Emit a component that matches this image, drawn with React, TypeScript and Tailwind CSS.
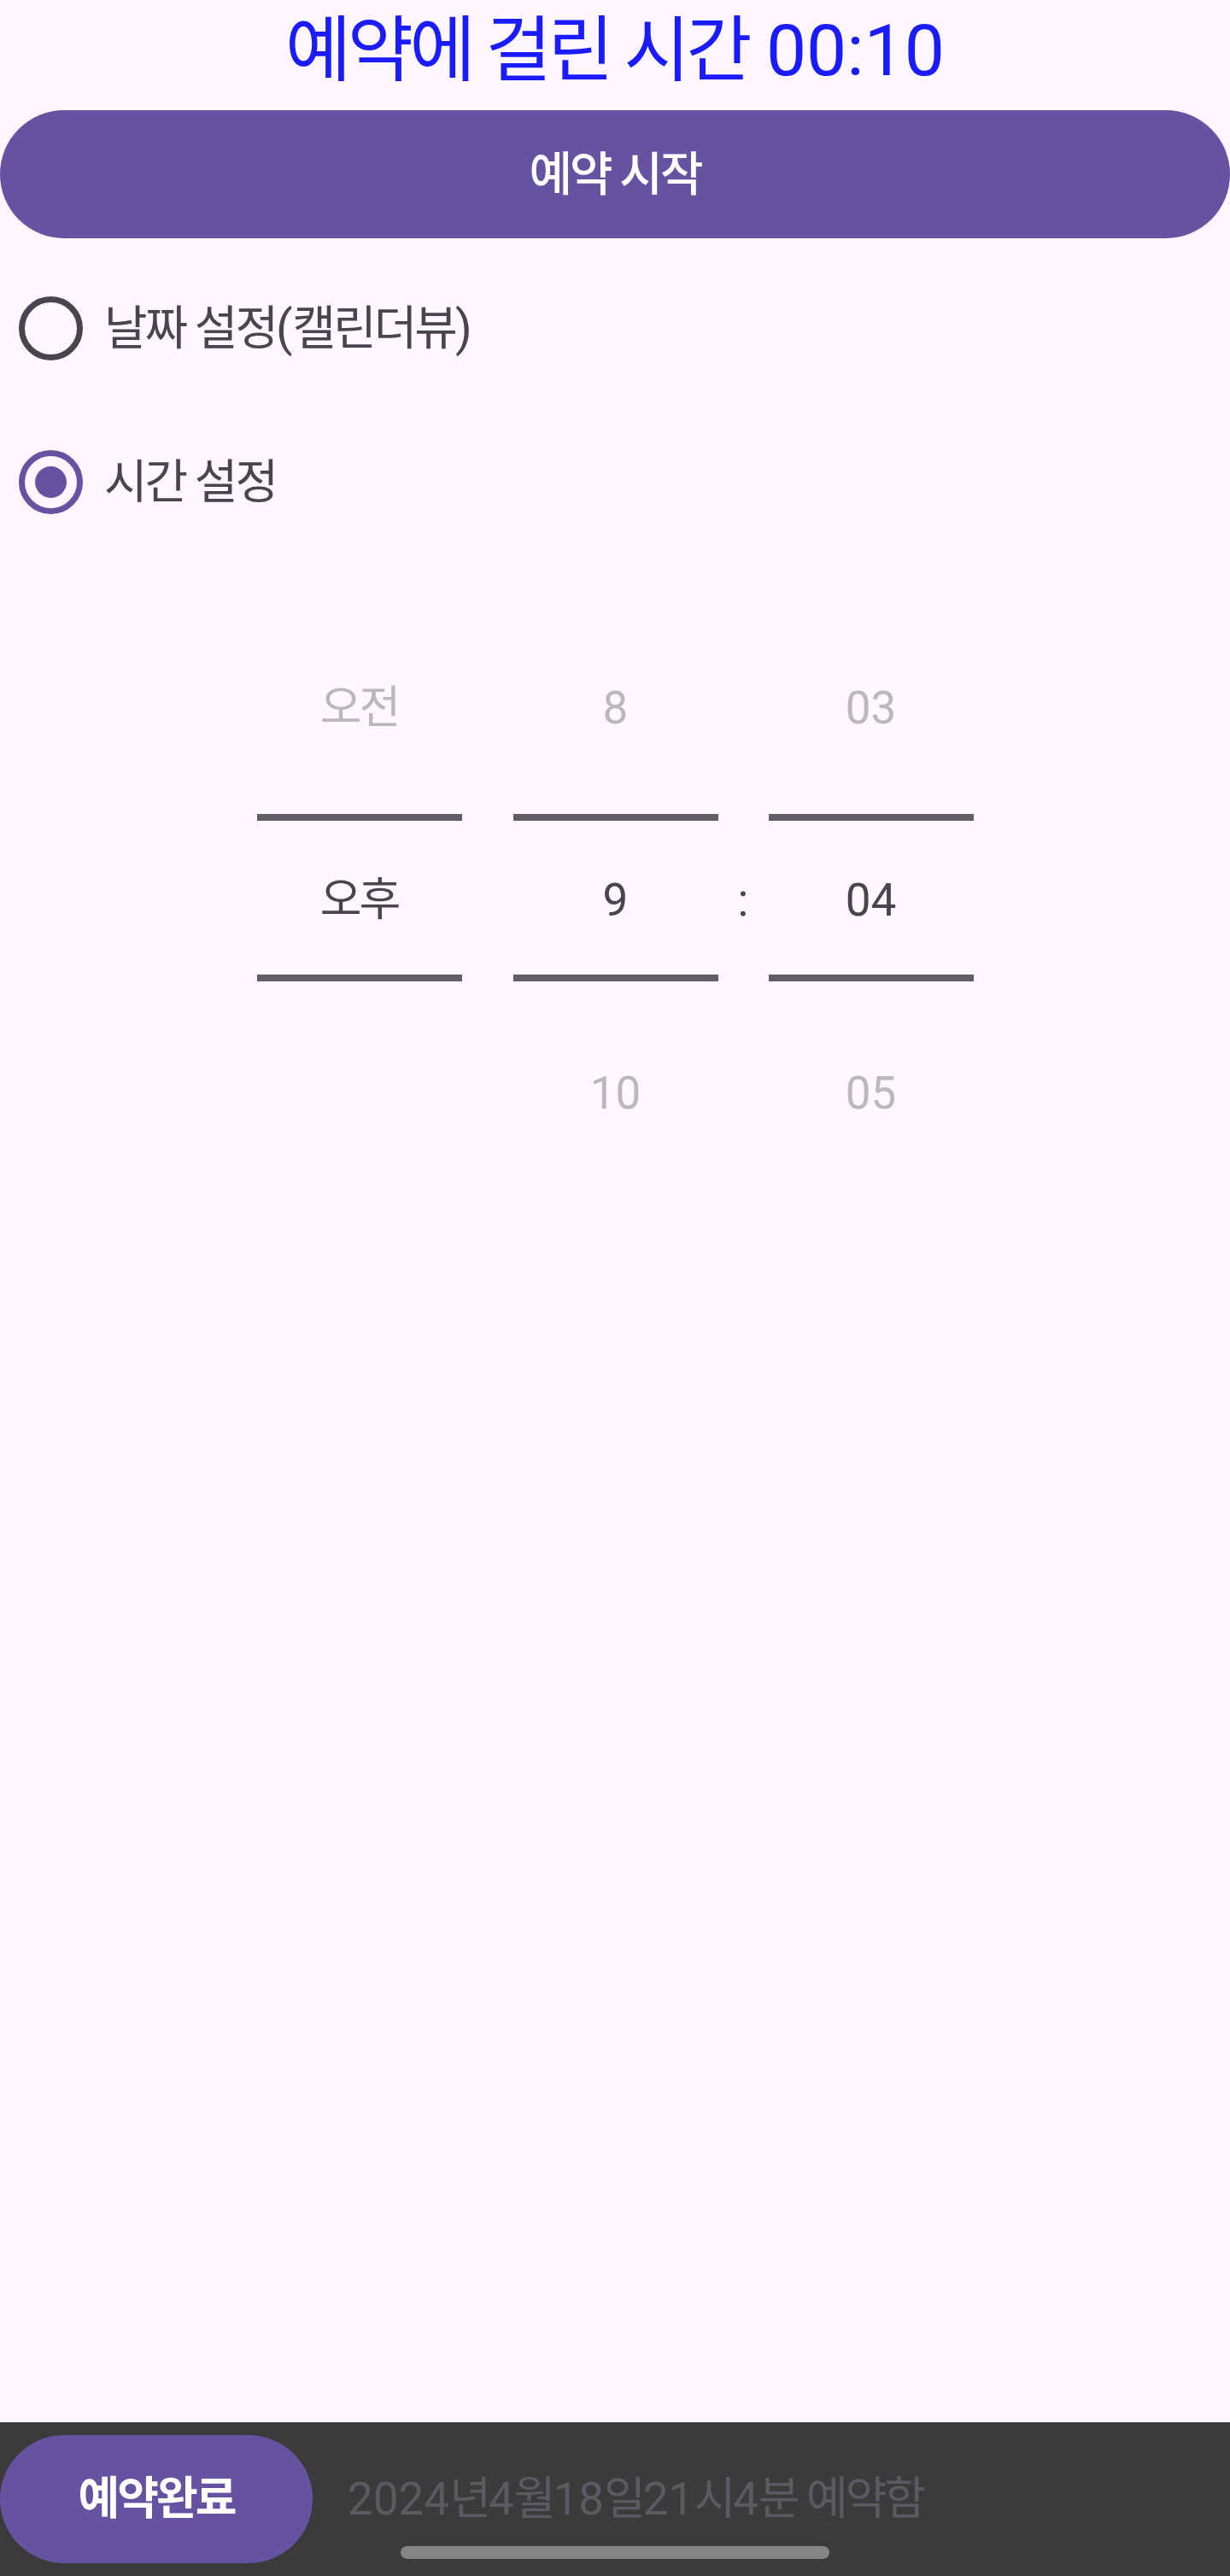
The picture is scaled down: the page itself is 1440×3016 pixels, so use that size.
import React from "react";

function PickerColumn({
  top,
  mid,
  bottom,
  korean,
}: {
  top: string;
  mid: string;
  bottom: string;
  korean?: boolean;
}) {
  const textCls = korean ? "text-[53px] tracking-[-3px]" : "text-[53px]";
  return (
    <div className="w-[240px] flex flex-col">
      <div className={`h-[253px] pt-[6px] flex items-center justify-center leading-none text-[#bab7bd] ${textCls}`}>
        {top}
      </div>
      <div className="h-[8px] bg-[#625e67]" />
      <div className={`h-[180px] pt-[6px] flex items-center justify-center leading-none text-[#49454f] ${textCls}`}>
        {mid}
      </div>
      <div className="h-[8px] bg-[#625e67]" />
      <div className={`h-[258px] pt-[4px] flex items-center justify-center leading-none text-[#bab7bd] ${textCls}`}>
        {bottom}
      </div>
    </div>
  );
}

export default function App() {
  return (
    <div className="h-[3016px] flex flex-col bg-[#fef7ff] [font-family:Roboto,'Noto_Sans_CJK_KR',sans-serif]">
      {/* Title */}
      <div className="h-[120px] flex items-center justify-center leading-none text-[84px] text-[#1b1bff]">
        <span className="tracking-[-4.5px]">예약에 걸린 시간</span>
        <span>&nbsp;00:10</span>
      </div>

      {/* Start button */}
      <button className="mt-[9px] h-[150px] w-full rounded-full bg-[#6552a0] flex items-center justify-center text-white font-medium text-[55px] tracking-[-3px] leading-none">
        예약 시작
      </button>

      {/* Radio group */}
      <div className="mt-[15px] flex flex-col">
        <div className="h-[180px] flex items-center pl-[22px] gap-[25px]">
          <div className="w-[75px] h-[75px] rounded-full border-[7px] border-[#49454f]" />
          <div className="flex items-center leading-none text-[#49454f]">
            <span className="text-[55px] tracking-[-3px]">날짜 설정</span>
            <span className="text-[57px]">(</span>
            <span className="text-[55px] tracking-[-3px]">캘린더뷰</span>
            <span className="text-[57px]">)</span>
          </div>
        </div>
        <div className="h-[180px] flex items-center pl-[22px] gap-[25px]">
          <div className="w-[75px] h-[75px] rounded-full border-[7px] border-[#6552a0] flex items-center justify-center">
            <div className="w-[37px] h-[37px] rounded-full bg-[#6552a0]" />
          </div>
          <span className="text-[55px] tracking-[-3px] leading-none text-[#49454f]">시간 설정</span>
        </div>
      </div>

      {/* Time picker */}
      <div className="mt-[46px] flex justify-center">
        <PickerColumn top="오전" mid="오후" bottom="" korean />
        <div className="w-[60px]" />
        <PickerColumn top="8" mid="9" bottom="10" />
        <div className="w-[59px] flex flex-col">
          <div className="h-[261px]" />
          <div className="h-[180px] pt-[6px] flex items-center justify-center text-[53px] leading-none text-[#49454f]">
            :
          </div>
        </div>
        <PickerColumn top="03" mid="04" bottom="05" />
      </div>

      {/* Bottom bar */}
      <div className="mt-auto h-[180px] bg-[#3b3b3b] relative flex items-start pt-[15px]">
        <button className="w-[366px] h-[150px] rounded-full bg-[#6552a0] flex items-center justify-center text-white font-semibold text-[53px] tracking-[-3px] leading-none">
          예약완료
        </button>
        <div className="ml-[41px] h-[150px] flex items-center leading-none text-[53px] text-[#5c5962]">
          <span>2024</span>
          <span className="tracking-[-3px]">년</span>
          <span>4</span>
          <span className="tracking-[-3px]">월</span>
          <span>18</span>
          <span className="tracking-[-3px]">일</span>
          <span>21</span>
          <span className="tracking-[-3px]">시</span>
          <span>4</span>
          <span className="tracking-[-3px]">분 예약함</span>
        </div>
        <div className="absolute left-1/2 -translate-x-1/2 bottom-[20px] w-[502px] h-[15px] rounded-full bg-[#858585]" />
      </div>
    </div>
  );
}
